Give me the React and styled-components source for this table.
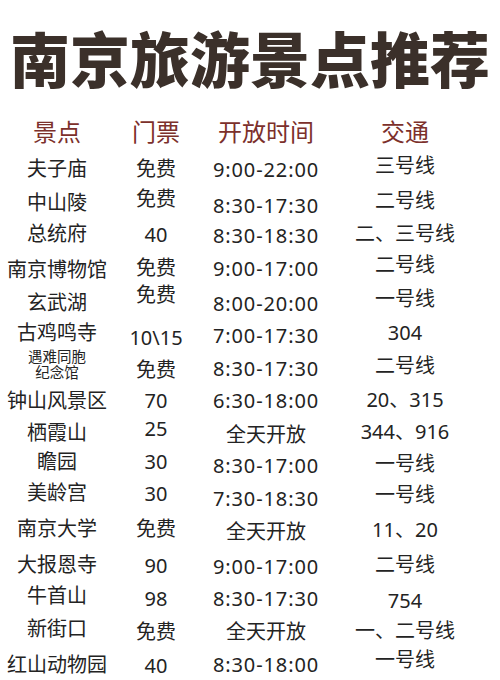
import styled, { createGlobalStyle } from 'styled-components';

const GlobalStyle = createGlobalStyle`
  html, body {
    margin: 0;
    padding: 0;
    background: #ffffff;
  }
  body {
    font-family: "Noto Sans", "Noto Sans CJK SC", sans-serif;
  }
`

// [景点, 门票, 开放时间, 交通, 行高, 各列上下偏移]
const spots = [
  ['夫子庙', '免费', '9:00-22:00', '三号线', 34.5, [1, 1, 2, -2]],
  ['中山陵', '免费', '8:30-17:30', '二号线', 33, [1, -3, 4, -1]],
  ['总统府', '40', '8:30-18:30', '二、三号线', 33, [-1, 0, 1, -1]],
  ['南京博物馆', '免费', '9:00-17:00', '二号线', 33.5, [2, 0, 1, -3]],
  ['玄武湖', '免费', '8:00-20:00', '一号线', 33.5, [2, -6, 3, -2]],
  ['古鸡鸣寺', '10\\15', '7:00-17:30', '304', 33, [-2, 3, 1, -2]],
  [['遇难同胞', '纪念馆'], '免费', '8:30-17:30', '二号线', 33.5, [-3, 2, 1, -2]],
  ['钟山风景区', '70', '6:30-18:00', '20、315', 32, [0, 0, 0, -1]],
  ['栖霞山', '25', '全天开放', '344、916', 31, [1, -3, 3, 0]],
  ['瞻园', '30', '8:30-17:00', '一号线', 30.5, [-1, -1, 3, 1]],
  ['美龄宫', '30', '7:30-18:30', '一号线', 33.5, [-2, -1, 4, 0]],
  ['南京大学', '免费', '全天开放', '11、20', 37, [-1, -1, 2, 0]],
  ['大报恩寺', '90', '9:00-17:00', '二号线', 35, [-1, 0, 1, -1]],
  ['牛首山', '98', '8:30-17:30', '754', 31.5, [-3, 0, 0, 2]],
  ['新街口', '免费', '全天开放', '一、二号线', 32, [-2, 1, 1, 0]],
  ['红山动物园', '40', '8:30-18:00', '一号线', 34, [1, 2, 1, -4]],
]

const heads = ['景点', '门票', '开放时间', '交通']

const App = () => {
  return (
    <Page>
      <GlobalStyle />
      <Title>南京旅游景点推荐</Title>
      <Table>
        <HeadRow>
          {heads.map((h) => (
            <HeadCell key={h}>{h}</HeadCell>
          ))}
        </HeadRow>
        {spots.map(([name, ticket, hours, transit, h, dy]) => (
          <Row key={hours + transit + h} $h={h}>
            <Cell $dy={dy[0]}>
              {Array.isArray(name) ? (
                <SmallName>
                  {name.map((line) => (
                    <span key={line}>{line}</span>
                  ))}
                </SmallName>
              ) : (
                name
              )}
            </Cell>
            <Cell $dy={dy[1]}>{ticket}</Cell>
            <TimeCell $dy={dy[2]} $digits={/\d/.test(hours)}>{hours}</TimeCell>
            <Cell $dy={dy[3]}>{transit}</Cell>
          </Row>
        ))}
      </Table>
    </Page>
  )
}

export default App;

const columns = '114px 84px 136px 142px'

const Page = styled.div`
  width: 500px;
  height: 680px;
  overflow: hidden;
  background: #ffffff;
  color: #232323;
`

const Title = styled.h1`
  margin: 0;
  height: 113.5px;
  display: flex;
  align-items: center;
  justify-content: center;
  font-family: "Noto Sans CJK SC", sans-serif;
  font-size: 60px;
  font-weight: 900;
  line-height: 1;
  color: #3b302a;
  white-space: nowrap;
`

const Table = styled.div`
  display: flex;
  flex-direction: column;
`

const HeadRow = styled.div`
  display: grid;
  grid-template-columns: ${columns};
  height: 37px;
  align-items: center;
`

const HeadCell = styled.div`
  text-align: center;
  font-size: 24px;
  line-height: 1.2;
  color: #7c302b;
  white-space: nowrap;
`

const Row = styled.div`
  display: grid;
  grid-template-columns: ${columns};
  height: ${(p) => p.$h}px;
  align-items: center;
`

const Cell = styled.div`
  text-align: center;
  font-size: 20px;
  line-height: 1.2;
  white-space: nowrap;
  transform: translateY(${(p) => p.$dy || 0}px);
`

const TimeCell = styled(Cell)`
  letter-spacing: ${(p) => (p.$digits ? '0.9px' : '0')};
`

const SmallName = styled.div`
  display: flex;
  flex-direction: column;
  align-items: center;
  font-size: 14.5px;
  line-height: 15.5px;
`
